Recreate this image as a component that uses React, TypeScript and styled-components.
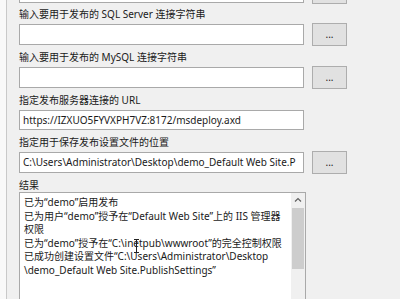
import styled, { createGlobalStyle } from 'styled-components';

const GlobalStyle = createGlobalStyle`
    html, body {
        margin: 0;
        padding: 0;
        background: #f0f0f0;
    }
    body {
        font-family: 'Noto Sans', 'Noto Sans CJK SC', sans-serif;
        font-size: 10px;
        color: #1a1a1a;
    }
`;

const Page = styled.div`
    display: flex;
    height: 299px;
    width: 400px;
    overflow: hidden;
    background: #f0f0f0;
`;

const LeftStrip = styled.div`
    width: 6px;
    flex: none;
    background: #f9f9f9;
    border-right: 1px solid #c9c9c9;
`;

const Main = styled.div`
    display: flex;
    flex-direction: column;
    padding-left: 12px;
`;

const Group = styled.div<{ $gap?: number }>`
    display: flex;
    flex-direction: column;
    margin-top: ${p => p.$gap ?? 5}px;
`;

const Label = styled.div<{ $mb?: number }>`
    height: 14px;
    line-height: 14px;
    margin-bottom: ${p => p.$mb ?? 3}px;
    white-space: nowrap;
`;

const Row = styled.div<{ $top?: number; $h?: number }>`
    display: flex;
    align-items: center;
    gap: 8px;
    height: ${p => p.$h ?? 21}px;
    margin-top: ${p => p.$top ?? 0}px;
`;

const Field = styled.div<{ $h?: number }>`
    box-sizing: border-box;
    flex: none;
    width: 285px;
    height: ${p => p.$h ?? 21}px;
    background: #fff;
    border: 1px solid #a9a9a9;
    padding: 0 3px;
    line-height: ${p => (p.$h ?? 21) - 2}px;
    white-space: nowrap;
    overflow: hidden;
`;

const DotsButton = styled.div`
    box-sizing: border-box;
    flex: none;
    width: 35px;
    height: 23px;
    background: #e1e1e1;
    border: 1px solid #adadad;
    display: flex;
    align-items: center;
    justify-content: center;
    font-size: 10px;
    line-height: 1;
    padding-bottom: 2px;
`;

const ResultBox = styled.div`
    position: relative;
    box-sizing: border-box;
    width: 287px;
    height: 120px;
    background: #fff;
    border: 1px solid #a9a9a9;
    display: flex;
`;

const ResultText = styled.div`
    flex: 1;
    padding: 3px 0 0 4px;
    line-height: 13.6px;
`;

const Line = styled.div`
    white-space: nowrap;
`;

const ScrollBar = styled.div`
    width: 14px;
    flex: none;
    background: #f0f0f0;
    display: flex;
    flex-direction: column;
    align-items: center;
`;

const Arrow = styled.div`
    height: 14px;
    display: flex;
    align-items: center;
    justify-content: center;
`;

const Thumb = styled.div`
    width: 12px;
    height: 61px;
    margin-top: 1px;
    background: #cdcdcd;
`;

const Track = styled.div`
    flex: 1;
`;

const Cursor = styled.svg`
    position: absolute;
    left: 113px;
    top: 46px;
`;

const Chevron = ({ up }: { up?: boolean }) => (
    <svg width="8" height="6" viewBox="0 0 8 6">
        <path d={up ? 'M1 4.5 L4 1.5 L7 4.5' : 'M1 1.5 L4 4.5 L7 1.5'} fill="none" stroke="#606060" strokeWidth="1.2" />
    </svg>
);

const lines = [
    '已为“demo”启用发布',
    '已为用户“demo”授予在“Default Web Site”上的 IIS 管理器',
    '权限',
    '已为“demo”授予在“C:\\inetpub\\wwwroot”的完全控制权限',
    '已成功创建设置文件“C:\\Users\\Administrator\\Desktop',
    '\\demo_Default Web Site.PublishSettings”',
];

export default function App() {
    return (
        <Page>
            <GlobalStyle />
            <LeftStrip />
            <Main>
                <Row $top={-18}>
                    <Field />
                    <DotsButton />
                </Row>
                <Group $gap={4}>
                    <Label>输入要用于发布的 SQL Server 连接字符串</Label>
                    <Row>
                        <Field />
                        <DotsButton>...</DotsButton>
                    </Row>
                </Group>
                <Group>
                    <Label>输入要用于发布的 MySQL 连接字符串</Label>
                    <Row>
                        <Field />
                        <DotsButton>...</DotsButton>
                    </Row>
                </Group>
                <Group>
                    <Label>指定发布服务器连接的 URL</Label>
                    <Row $h={20}>
                        <Field $h={20}>https://IZXUO5FYVXPH7VZ:8172/msdeploy.axd</Field>
                    </Row>
                </Group>
                <Group>
                    <Label>指定用于保存发布设置文件的位置</Label>
                    <Row>
                        <Field>C:\Users\Administrator\Desktop\demo_Default Web Site.P</Field>
                        <DotsButton>...</DotsButton>
                    </Row>
                </Group>
                <Group>
                    <Label $mb={0}>结果</Label>
                    <ResultBox>
                        <ResultText>
                            {lines.map((l, i) => <Line key={i}>{l}</Line>)}
                        </ResultText>
                        <ScrollBar>
                            <Arrow><Chevron up /></Arrow>
                            <Thumb />
                            <Track />
                            <Arrow><Chevron /></Arrow>
                        </ScrollBar>
                        <Cursor width="7" height="14" viewBox="0 0 7 14">
                            <path d="M1 0.5 H6 M3.5 0.5 V13.5 M1 13.5 H6" stroke="#222" strokeWidth="1" fill="none" />
                        </Cursor>
                    </ResultBox>
                </Group>
            </Main>
        </Page>
    );
}
